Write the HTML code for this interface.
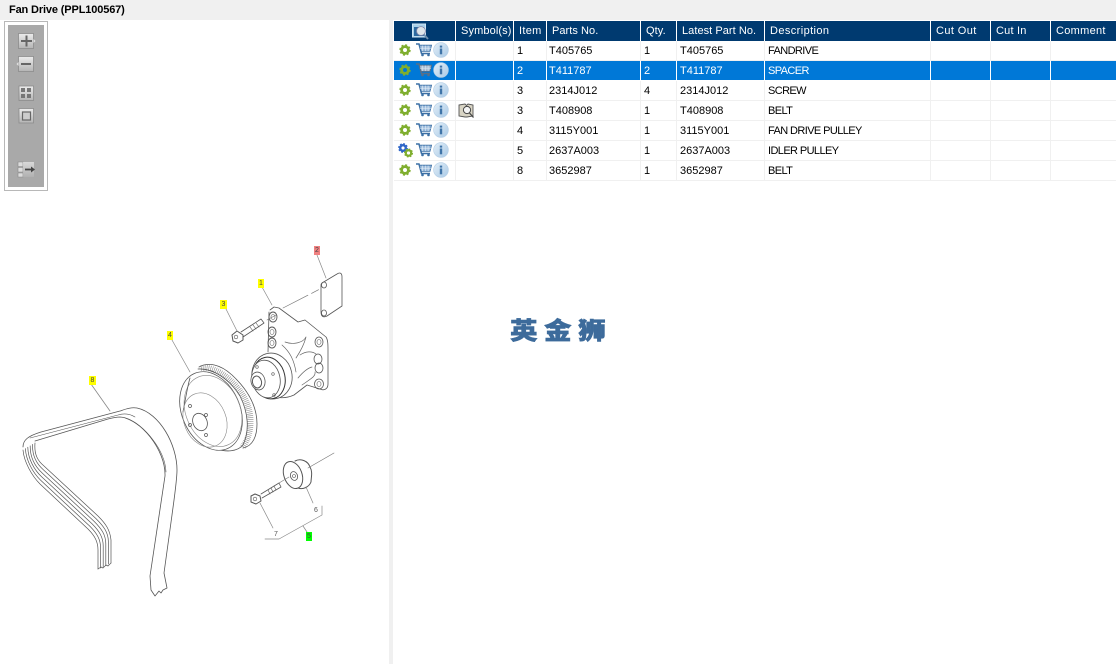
<!DOCTYPE html>
<html><head><meta charset="utf-8">
<style>
html,body{margin:0;padding:0;width:1116px;height:664px;overflow:hidden;background:#f0f0f0;font-family:"Liberation Sans","Noto Sans CJK SC",sans-serif;}
.a{position:absolute}
#title{left:9px;top:3px;font-size:11px;font-weight:bold;color:#000;line-height:14px;letter-spacing:-.14px}
#left{left:0;top:20px;width:389px;height:644px;background:#fff}
#right{left:393px;top:20px;width:723px;height:644px;background:#fff}
table{position:absolute;left:394px;top:21px;border-collapse:separate;border-spacing:0;table-layout:fixed;width:722px}
td,th{box-sizing:border-box;height:20px;padding:0 0 0 3px;font-size:11px;font-weight:normal;text-align:left;white-space:nowrap;overflow:hidden;border-right:1px solid #f0f0f0;border-bottom:1px solid #f0f0f0;color:#000;line-height:18px}
th{background:#003a70;color:#fff;padding-left:5px;border-right:1px solid #fff;border-bottom:0;letter-spacing:.4px;line-height:20px}
td:last-child,th:last-child{border-right:0}
tr.s td{background:#0078d7;color:#fff;border-right-color:#fff;border-bottom-color:#fff}
td.i{padding:0;line-height:0}
td svg,th svg{display:block}
.d{letter-spacing:-.6px}
#wm{left:510px;top:317px;font-size:24px;font-weight:900;color:#3d6b9b;letter-spacing:5.6px;line-height:30px;white-space:nowrap;transform:scaleX(1.15);transform-origin:0 0;-webkit-text-stroke:.5px #3d6b9b;font-family:"Liberation Sans","Noto Sans CJK SC",sans-serif}
#tb{left:4px;top:21px;width:42px;height:168px;border:1px solid #b8b8b8;background:#fff}
#tbi{left:8px;top:25px;width:36px;height:162px;background:#a9a9a9}
.lb{position:absolute;font-size:7px;line-height:9px;text-align:center;color:#444}
</style></head>
<body>
<div class="a" id="left"></div>
<div class="a" id="right"></div>
<div class="a" id="title">Fan Drive (PPL100567)</div>
<svg width="0" height="0" style="position:absolute">
<defs>
<linearGradient id="ig" x1="0" y1="0" x2="1" y2="1"><stop offset="0" stop-color="#e4eff8"/><stop offset="1" stop-color="#a9c9e6"/></linearGradient>
<linearGradient id="bg" x1="0" y1="0" x2="0" y2="1"><stop offset="0" stop-color="#ececec"/><stop offset="1" stop-color="#b4b4b4"/></linearGradient>
<g id="gear"><circle r="3.4" fill="none" stroke="#7fae2e" stroke-width="2.8"/><circle r="4.9" fill="none" stroke="#7fae2e" stroke-width="1.6" stroke-dasharray="2 1.85"/></g>
<g id="gearb"><circle r="2.8" fill="none" stroke="#2f66c8" stroke-width="2.4"/><circle r="4.2" fill="none" stroke="#2f66c8" stroke-width="1.4" stroke-dasharray="1.8 1.5"/></g>
<g id="cart"><path d="M0 1H3L5.500 10.500H14" fill="none" stroke="#3c70a6" stroke-width="1.500"/><path d="M3.300 2.200H15.500L14 8.300H5z" fill="#9dbcdc" stroke="#3c70a6" stroke-width=".9"/><path d="M6.500 2.500V8M9.300 2.500V8M12.100 2.500V8M4 5.200H15" stroke="#e4eef7" stroke-width=".6" fill="none"/><circle cx="6.500" cy="12" r="1.300" fill="#3c70a6"/><circle cx="12.500" cy="12" r="1.300" fill="#3c70a6"/></g>
<g id="carts"><path d="M0 1H3L5.500 10.500H14" fill="none" stroke="#5a6f86" stroke-width="1.500"/><path d="M3.300 2.200H15.500L14 8.300H5z" fill="#a9bdd2" stroke="#5a6f86" stroke-width=".9"/><path d="M6.500 2.500V8M9.300 2.500V8M12.100 2.500V8M4 5.200H15" stroke="#dbe6f0" stroke-width=".6" fill="none"/><circle cx="6.500" cy="12" r="1.300" fill="#5a6f86"/><circle cx="12.500" cy="12" r="1.300" fill="#5a6f86"/></g>
<g id="info"><circle r="7.400" fill="url(#ig)" stroke="#b5cfe6" stroke-width=".6"/><rect x="-1.200" y="-1.500" width="2.400" height="5.800" fill="#3f74a8"/><rect x="-1.200" y="-4.400" width="2.400" height="2" fill="#3f74a8"/></g>
<filter id="sf" x="0" y="0" width="100%" height="100%"><feGaussianBlur stdDeviation=".28"/></filter>
</defs>
</svg>
<table>
<colgroup><col style="width:62px"><col style="width:58px"><col style="width:33px"><col style="width:94px"><col style="width:36px"><col style="width:88px"><col style="width:166px"><col style="width:60px"><col style="width:60px"><col style="width:65px"></colgroup>
<tr>
<th style="padding:0"><svg width="61" height="20"><rect x="18.500" y="3" width="13" height="13" fill="#a8d0ea" stroke="#cfe6f5"/><rect x="20" y="6" width="10" height="9" fill="#2d6aa0"/><circle cx="27" cy="10" r="4.400" fill="#dfe6ea" stroke="#88a" stroke-width=".8"/><path d="M30 13.500L34 18" stroke="#6f8fae" stroke-width="1.800"/></svg></th>
<th style="letter-spacing:.12px">Symbol(s)</th><th style="letter-spacing:.3px">Item</th><th style="letter-spacing:.05px">Parts No.</th><th style="letter-spacing:.1px">Qty.</th><th style="letter-spacing:.05px">Latest Part No.</th><th>Description</th><th>Cut Out</th><th style="letter-spacing:.2px">Cut In</th><th style="letter-spacing:.3px">Comment</th></tr>
<tr><td class="i"><svg width="61" height="19"><use href="#gear" x="11" y="9"/><use href="#cart" x="22" y="2"/><use href="#info" x="47" y="9"/></svg></td><td></td><td>1</td><td style="padding-left:2px">T405765</td><td>1</td><td>T405765</td><td class="d">FANDRIVE</td><td></td><td></td><td></td></tr>
<tr class="s"><td class="i"><svg width="61" height="19"><use href="#gear" x="11" y="9"/><circle cx="11" cy="9" r="1.600" fill="#0078d7"/><use href="#carts" x="22" y="2"/><use href="#info" x="47" y="9"/></svg></td><td></td><td>2</td><td style="padding-left:2px">T411787</td><td>2</td><td>T411787</td><td class="d">SPACER</td><td></td><td></td><td></td></tr>
<tr><td class="i"><svg width="61" height="19"><use href="#gear" x="11" y="9"/><use href="#cart" x="22" y="2"/><use href="#info" x="47" y="9"/></svg></td><td></td><td>3</td><td style="padding-left:2px">2314J012</td><td>4</td><td>2314J012</td><td class="d">SCREW</td><td></td><td></td><td></td></tr>
<tr><td class="i"><svg width="61" height="19"><use href="#gear" x="11" y="9"/><use href="#cart" x="22" y="2"/><use href="#info" x="47" y="9"/></svg></td><td class="i"><svg width="57" height="19"><path d="M3 4L9 3L10.500 4.500L12 3L17 4V15L11 16H9L3 15z" fill="#d8d4c4" stroke="#555" stroke-width=".9"/><circle cx="11" cy="9" r="3.600" fill="#f4f4f4" stroke="#444"/><path d="M13.500 12L17.500 16.500" stroke="#444" stroke-width="1.300"/></svg></td><td>3</td><td style="padding-left:2px">T408908</td><td>1</td><td>T408908</td><td class="d">BELT</td><td></td><td></td><td></td></tr>
<tr><td class="i"><svg width="61" height="19"><use href="#gear" x="11" y="9"/><use href="#cart" x="22" y="2"/><use href="#info" x="47" y="9"/></svg></td><td></td><td>4</td><td style="padding-left:2px">3115Y001</td><td>1</td><td>3115Y001</td><td class="d">FAN DRIVE PULLEY</td><td></td><td></td><td></td></tr>
<tr><td class="i"><svg width="61" height="19"><use href="#gearb" x="9" y="7"/><use href="#gear" x="14.500" y="12" transform="translate(14.500 12) scale(.8) translate(-14.500 -12)"/><use href="#cart" x="22" y="2"/><use href="#info" x="47" y="9"/></svg></td><td></td><td>5</td><td style="padding-left:2px">2637A003</td><td>1</td><td>2637A003</td><td class="d">IDLER PULLEY</td><td></td><td></td><td></td></tr>
<tr><td class="i"><svg width="61" height="19"><use href="#gear" x="11" y="9"/><use href="#cart" x="22" y="2"/><use href="#info" x="47" y="9"/></svg></td><td></td><td>8</td><td style="padding-left:2px">3652987</td><td>1</td><td>3652987</td><td class="d">BELT</td><td></td><td></td><td></td></tr>
</table>
<div class="a" id="wm">英金狮</div>
<div class="a" id="tb"></div>
<div class="a" id="tbi"></div>
<svg class="a" style="left:0;top:0" width="60" height="200">
<g stroke="#8c8c8c" stroke-width=".8" fill="url(#bg)">
<rect x="18.500" y="33.500" width="15" height="15"/><rect x="18.500" y="56.500" width="15" height="15"/><rect x="19" y="86" width="14.500" height="14.500"/><rect x="19" y="108.500" width="14.500" height="14.500"/>
</g>
<path d="M33.500 39L35.500 41L33.500 43zM18.500 62L16.500 64L18.500 66z" fill="#e2e2e2"/>
<path d="M21 41H32M26.500 35.500V46.500M21 64H31" stroke="#666" stroke-width="2" fill="none"/>
<path d="M21 88h4v4h-4zM27 88h4v4h-4zM21 94h4v4h-4zM27 94h4v4h-4z" fill="#777"/>
<rect x="22.500" y="112" width="8" height="8" fill="#ccc" stroke="#666" stroke-width="1.200"/>
<path d="M18 162h5v4.500h-5zM18 167.500h5v4.500h-5zM18 173h5v4h-5z" fill="#ddd" stroke="#888" stroke-width=".6"/>
<rect x="23" y="162" width="11" height="15" fill="url(#bg)" opacity=".7"/>
<path d="M25 169.500H32" stroke="#444" stroke-width="1.800"/><path d="M31 166.500L35 169.500L31 172.500z" fill="#444"/>
</svg>
<svg class="a" style="left:0;top:0" width="389" height="664" fill="none" stroke="#555" stroke-width=".8" stroke-linejoin="round" stroke-linecap="round" filter="url(#sf)">
<!-- belt -->
<path d="M23 447C23 440 28 436 41 432L120 411C126 409 131 407 137 408C160 413 177 445 177 470C177 480 174 500 172 515L164 573L167 588L163 590L161 593L159 591L155 596L151 590L150 576L165 476C166 450 140 418 120 417C116 417 112 418 108 419L35 441"/>
<path d="M30 438L118 415C124 413 130 414 135 417" stroke-width=".6"/>
<path d="M125 418C145 425 165 450 166 472" stroke-width=".6"/>
<g stroke-width=".7">
<path d="M23 450C24 462 32 476 40 484L88 529C95 536 98 542 98 550L98 569"/>
<path d="M25.400 448.600C26 460.600 33.200 473 40.800 480.400L90 526.400C97.200 533.600 100.600 539.600 100.600 548L100.600 568"/>
<path d="M27.800 447.200C28 459.200 34.400 470 41.600 476.800L92 523.800C99.400 531.200 103.200 537.200 103.200 546L103.200 566.600"/>
<path d="M30.200 445.800C30 457.800 35.600 467 42.400 473.200L94 521.200C101.600 528.800 105.800 534.800 105.800 544L105.800 565.500"/>
<path d="M32.600 444.400C32 456.400 36.800 464 43.200 469.600L96 518.600C103.800 526.400 108.400 532.400 108.400 542L108.400 564"/>
<path d="M35 443C34 455 38 461 44 466L98 516C106 524 110 530 111 540L111 563"/>
</g>
<path d="M98 569L101 567L103 568L106 565L108 566L111 563" stroke-width=".7"/>
<path d="M91 384L110 411" stroke="#888"/>
<!-- pulley -->
<path d="M199 367C208 362 220 364 232 375C247 389 257 405 257 424C257 436 253 446 243 448" fill="#fff"/>
<path d="M201 368C216 366 233 379 244 397C252 411 254 432 242 448" stroke="#888" stroke-width="6" stroke-dasharray=".6 1.300" stroke-linecap="butt"/>
<path d="M198 369C214 368 230 380 240 396C248 412 250 430 243 445C237 452 226 452 217 449" stroke="#555"/>
<ellipse cx="211" cy="411" rx="29" ry="41" transform="rotate(-24 211 411)" fill="#fff"/>
<ellipse cx="213" cy="411" rx="27" ry="37" transform="rotate(-24 213 411)" stroke="#888" stroke-width=".6"/>
<path d="M183 412C186 396 188 384 190 378"/>
<ellipse cx="205" cy="420" rx="21" ry="28" transform="rotate(-22 205 420)" stroke="#888" stroke-width=".6"/>
<ellipse cx="200" cy="422" rx="7" ry="9" transform="rotate(-25 200 422)"/>
<circle cx="190" cy="406" r="1.500" stroke-width=".7"/><circle cx="206" cy="415" r="1.500" stroke-width=".7"/><circle cx="190" cy="425" r="1.500" stroke-width=".7"/><circle cx="206" cy="435" r="1.500" stroke-width=".7"/>
<!-- pump -->
<path d="M270 310L274 307L279 308L298 322L305 320L326 337C328 340 328 345 328 350L328 384C328 389 324 391 320 389L307 385L294 395C283 400 270 398 264 390" fill="#fff"/>
<path d="M269 312L268 352" />
<ellipse cx="273" cy="317" rx="4" ry="5" stroke-width=".9"/><ellipse cx="273" cy="317" rx="2" ry="2.500" stroke="#888"/>
<ellipse cx="272" cy="332" rx="4" ry="5" stroke-width=".9"/><ellipse cx="272" cy="332" rx="2" ry="2.500" stroke="#888"/>
<ellipse cx="272" cy="343" rx="4" ry="5" stroke-width=".9"/><ellipse cx="272" cy="343" rx="2" ry="2.500" stroke="#888"/>
<ellipse cx="319" cy="342" rx="4" ry="5"/><ellipse cx="319" cy="342" rx="2" ry="2.500" stroke="#888"/>
<ellipse cx="318" cy="359" rx="4" ry="5"/><ellipse cx="319" cy="368" rx="4" ry="5"/>
<ellipse cx="319" cy="384" rx="4.500" ry="5"/><ellipse cx="319" cy="384" rx="2" ry="2.500" stroke="#888"/>
<path d="M285 342C293 345 303 343 306 337C304 345 300 352 296 358M300 355C306 351 312 351 316 354M298 378C303 372 308 368 312 367M302 385C312 378 316 376 315 372M282 345C290 352 294 360 296 372" stroke="#666" stroke-width=".7"/>
<ellipse cx="272" cy="376" rx="20" ry="23" transform="rotate(-12 272 376)" fill="#fff"/>
<ellipse cx="269" cy="378" rx="16" ry="21" transform="rotate(-12 269 378)" stroke="#333" stroke-width="1" fill="#fff"/>
<ellipse cx="266" cy="379" rx="14" ry="19" transform="rotate(-12 266 379)" fill="#fff"/>
<ellipse cx="258" cy="381" rx="7" ry="9" transform="rotate(-12 258 381)" fill="#fff"/>
<ellipse cx="257" cy="382" rx="4.500" ry="6" transform="rotate(-12 257 382)" stroke-width="1" fill="#fff"/>
<circle cx="257" cy="367" r="1.300" stroke-width=".6"/><circle cx="273" cy="374" r="1.300" stroke-width=".6"/><circle cx="274" cy="395" r="1.300" stroke-width=".6"/>
<path d="M283 308L322 288M267 320L276 315" stroke="#777" stroke-width=".7" stroke-dasharray="28 4 8 3"/>
<!-- gasket -->
<path d="M322 283L337 274C340 272 342 273 342 277L342 306L327 316C323 318 321 316 321 312L321 286C321 284 321 284 322 283z" fill="#fff"/>
<ellipse cx="324" cy="285" rx="2.500" ry="3"/><ellipse cx="324" cy="313" rx="2.500" ry="3"/>
<!-- bolt -->
<path d="M241 332L261 319L264 323L243 337" fill="#fff"/><path d="M250 327L253 331M253 325L256 329M256 323L259 327" stroke-width=".6"/>
<path d="M232 335L237 331L243 335L243 340L238 343L233 341z" fill="#fff" stroke-width="1"/><circle cx="236" cy="337" r="1.800" stroke-width=".6"/>
<!-- idler -->
<path d="M295 461C301 458 308 461 310 467C313 472 311 478 311 482C309 487 303 490 298 488" fill="#fff" stroke-width="1"/>
<ellipse cx="293" cy="475" rx="9" ry="14" transform="rotate(-20 293 475)" fill="#fff" stroke-width="1"/>
<ellipse cx="294" cy="476" rx="3.500" ry="4.500" transform="rotate(-20 294 476)"/><circle cx="294" cy="476" r="1.500" stroke-width=".6"/>
<path d="M308 468L334 453" stroke="#777" stroke-width=".7"/>
<path d="M261 494L279 483L281 487L262 498" fill="#fff"/><path d="M268 490L270 494M271 488L273 492M274 486L276 490" stroke-width=".6"/>
<path d="M251 496L255 494L260 496L261 501L256 504L251 502z" fill="#fff" stroke-width="1"/><circle cx="255" cy="499" r="1.800" stroke-width=".6"/>
<path d="M279 483L289 477" stroke="#777" stroke-width=".6"/>
<g stroke="#888" stroke-width=".7">
<path d="M306 487L313 503M260 503L273 528M265 539H279L322 515V506M303 526L307 532"/>
<path d="M262 287L272 305M317 255L326 278M226 309L237 331M172 340L190 372"/>
</g>
</svg>
<div class="lb" style="left:258px;top:279px;width:6px;height:9px;background:#ff0">1</div>
<div class="lb" style="left:314px;top:246px;width:6px;height:9px;background:#f08080">2</div>
<div class="lb" style="left:220px;top:300px;width:7px;height:9px;background:#ff0">3</div>
<div class="lb" style="left:167px;top:331px;width:6px;height:9px;background:#ff0">4</div>
<div class="lb" style="left:89px;top:376px;width:7px;height:9px;background:#ff0">8</div>
<div class="lb" style="left:306px;top:532px;width:6px;height:9px;background:#0f0">5</div>
<div class="lb" style="left:313px;top:506px;width:6px;color:#555">6</div>
<div class="lb" style="left:273px;top:530px;width:6px;color:#555">7</div>
</body></html>
